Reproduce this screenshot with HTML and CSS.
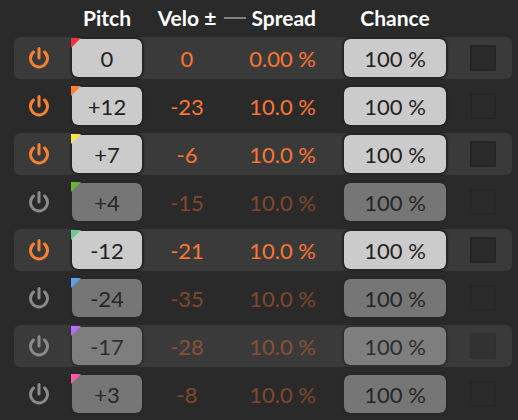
FILE: index.html
```html
<!DOCTYPE html>
<html lang="en">
<head>
    <meta charset="UTF-8">
    <meta name="viewport" content="width=device-width, initial-scale=1.0">
    <title>Voices</title>
    <link rel="stylesheet" href="styles.css">
</head>
<body>
    <svg class="sprite" aria-hidden="true">
        <symbol id="power" viewBox="0 0 20 22">
            <path d="M4.5 5A8.5 8.5 0 1 0 15.5 5M10 1.6V11" fill="none" stroke="currentColor" stroke-width="3" stroke-linecap="round"/>
        </symbol>
    </svg>

    <table class="voices">
        <colgroup>
            <col class="col-power">
            <col class="col-pitch">
            <col class="col-velo">
            <col class="col-spread">
            <col class="col-chance">
            <col class="col-tick">
        </colgroup>
        <thead>
            <tr>
                <td></td>
                <th scope="col">Pitch</th>
                <th scope="col">Velo ±</th>
                <th scope="col" class="spread"><span class="link-line"></span>Spread</th>
                <th scope="col">Chance</th>
                <td></td>
            </tr>
        </thead>
        <tbody></tbody>
    </table>

    <script src="script.js"></script>
</body>
</html>
```
FILE: styles.css
```css
* {
    box-sizing: border-box;
}

body {
    margin: 0;
    padding: 0 6px 0 14px;
    background-color: #2a2a2a;
    color: #fff;
    font-family: Lato, sans-serif;
    font-size: 22px;
}

.sprite {
    display: none;
}

.voices {
    width: 100%;
    table-layout: fixed;
    border-collapse: separate;
    border-spacing: 0 6px;
    margin-top: -6px;
}

/* shares of the row, the table stretches them to its own width */
.col-power {
    width: 50px;
}

.col-pitch {
    width: 86px;
}

.col-velo {
    width: 74px;
}

.col-spread {
    width: 112px;
}

.col-chance {
    width: 118px;
}

.col-tick {
    width: 58px;
}

td,
th {
    padding: 0;
    text-align: center;
    vertical-align: middle;
}

th {
    height: 31px;
    padding-top: 4px;
    font-size: 21px;
    line-height: 24px;
    font-weight: bold;
    white-space: nowrap;
}

.voices .spread {
    text-align: right;
    padding-right: 20px;
}

.link-line {
    display: inline-block;
    width: 22px;
    height: 2px;
    margin-right: 5px;
    vertical-align: 7px;
    background-color: #808080;
}

tbody td {
    height: 42px;
}

tbody tr:nth-child(odd) td {
    background-color: #3a3a3a;
}

tbody td:first-child {
    border-radius: 6px 0 0 6px;
}

tbody td:last-child {
    border-radius: 0 6px 6px 0;
}

.power {
    display: block;
    margin: 0 auto;
    padding: 0;
    border: none;
    background: none;
    color: #fa822e;
    cursor: pointer;
}

.power svg {
    display: block;
    width: 20px;
    height: 22px;
}

input[type="text"] {
    display: block;
    height: 40px;
    margin: 0 auto;
    padding: 0;
    border: none;
    background: none;
    color: #fa7532;
    font: inherit;
    text-align: center;
}

.value {
    width: 100%;
}

.voices .spread .value {
    text-align: right;
}

input.box {
    width: 72px;
    border: 1px solid #242424;
    border-radius: 7px;
    background-color: #cbcbcb;
    background-clip: padding-box;
    box-shadow: 0 0 1px 1px #262626;
    color: #222;
}

input.box.wide {
    width: 104px;
}

.pitch {
    position: relative;
    width: 72px;
    margin: 0 auto;
}

.tag {
    position: absolute;
    top: 0;
    left: 0;
    width: 10px;
    height: 10px;
    clip-path: polygon(0 0, 100% 0, 0 100%);
}

.tick {
    appearance: none;
    display: block;
    width: 26px;
    height: 26px;
    margin: 0 auto;
    border: 2px solid #252525;
    background-color: #2a2a2a;
}

.off .power {
    color: #8a8a8a;
}

.off input {
    opacity: 0.47;
}

.off .value {
    opacity: 0.4;
}

.tag.red { background-color: #ea3440; }
.tag.orange { background-color: #fa822e; }
.tag.yellow { background-color: #fde444; }
.tag.green { background-color: #68b536; }
.tag.mint { background-color: #6fc792; }
.tag.blue { background-color: #5c9fea; }
.tag.purple { background-color: #b66cf8; }
.tag.pink { background-color: #f75ca6; }
```
FILE: script.js
```js
const voices = [
    { tag: 'red', pitch: '0', velo: '0', spread: '0.00 %', on: true },
    { tag: 'orange', pitch: '+12', velo: '-23', spread: '10.0 %', on: true },
    { tag: 'yellow', pitch: '+7', velo: '-6', spread: '10.0 %', on: true },
    { tag: 'green', pitch: '+4', velo: '-15', spread: '10.0 %', on: false },
    { tag: 'mint', pitch: '-12', velo: '-21', spread: '10.0 %', on: true },
    { tag: 'blue', pitch: '-24', velo: '-35', spread: '10.0 %', on: false },
    { tag: 'purple', pitch: '-17', velo: '-28', spread: '10.0 %', on: false },
    { tag: 'pink', pitch: '+3', velo: '-8', spread: '10.0 %', on: false }
];

const body = document.querySelector('.voices tbody');

body.innerHTML = voices.map((v, i) => `
    <tr class="${v.on ? 'on' : 'off'}">
        <td><button class="power" aria-label="Voice ${i + 1} power" aria-pressed="${v.on}"><svg><use href="#power"/></svg></button></td>
        <td><div class="pitch"><input type="text" class="box" aria-label="Pitch" value="${v.pitch}"><span class="tag ${v.tag}"></span></div></td>
        <td><input type="text" class="value" aria-label="Velocity" value="${v.velo}"></td>
        <td class="spread"><input type="text" class="value" aria-label="Spread" value="${v.spread}"></td>
        <td><input type="text" class="box wide" aria-label="Chance" value="100 %"></td>
        <td><input type="checkbox" class="tick" aria-label="Voice ${i + 1} select"></td>
    </tr>`).join('');

body.addEventListener('click', e => {
    const power = e.target.closest('.power');
    if (power) {
        const off = power.closest('tr').classList.toggle('off');
        power.setAttribute('aria-pressed', !off);
    }
});
```
